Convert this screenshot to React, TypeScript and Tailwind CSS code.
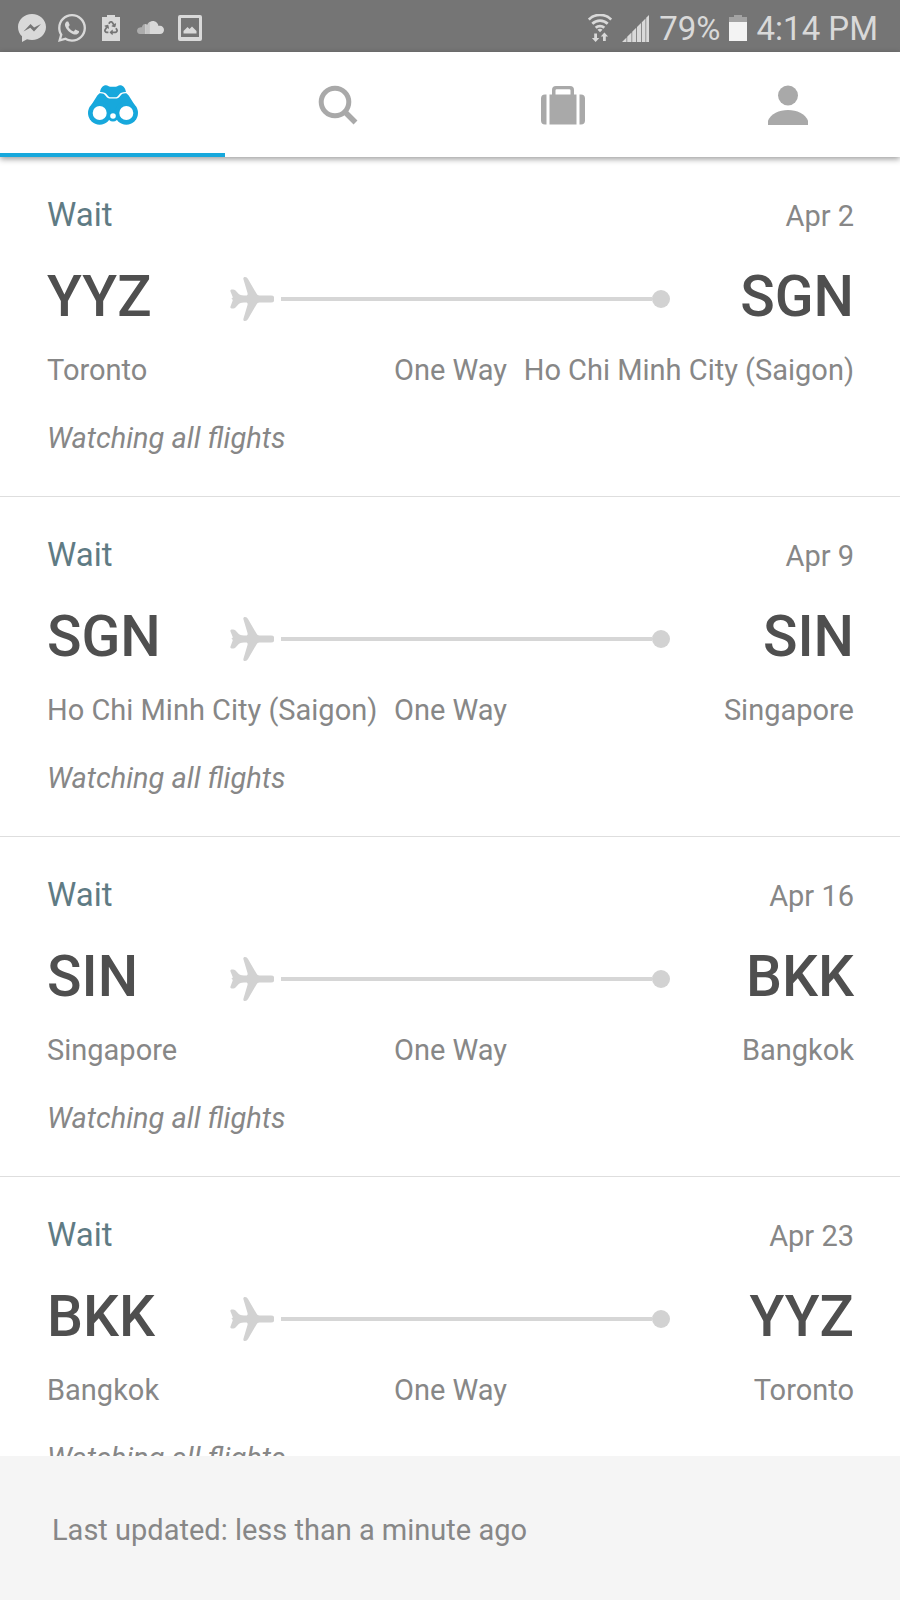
import { useState, type ReactNode } from "react";
import { FaRecycle, FaWhatsapp } from "react-icons/fa";

type Flight = {
  date: string;
  from: string;
  fromCity: string;
  to: string;
  toCity: string;
};

const flights: Flight[] = [
  { date: "Apr 2", from: "YYZ", fromCity: "Toronto", to: "SGN", toCity: "Ho Chi Minh City (Saigon)" },
  { date: "Apr 9", from: "SGN", fromCity: "Ho Chi Minh City (Saigon)", to: "SIN", toCity: "Singapore" },
  { date: "Apr 16", from: "SIN", fromCity: "Singapore", to: "BKK", toCity: "Bangkok" },
  { date: "Apr 23", from: "BKK", fromCity: "Bangkok", to: "YYZ", toCity: "Toronto" },
];

function MessengerIcon() {
  return (
    <svg viewBox="0 0 28 28" className="size-7" fill="currentColor" aria-hidden="true">
      <path
        fillRule="evenodd"
        d="M14 0C6.300 0 0 5.800 0 13c0 4 1.500 7 4 9.200V28l5-2.700c1.600.500 3.300.700 5 .700 7.700 0 14-5.800 14-13S21.700 0 14 0ZM5.500 17.500 12.500 10l3.600 3.600L23 10l-7 7.500-3.700-3.700Z"
      />
    </svg>
  );
}

function PowerSavingIcon() {
  return (
    <span className="grid" aria-hidden="true">
      <svg viewBox="0 0 18 26" className="col-start-1 row-start-1 h-[26px] w-[18px]" fill="currentColor">
        <path d="M5 0h8v2h5v24H0V2h5Z" />
      </svg>
      <FaRecycle className="col-start-1 row-start-1 size-[14px] place-self-center text-[#757575]" />
    </span>
  );
}

function CloudIcon() {
  return (
    <svg viewBox="-3 0 30 14" className="h-[14px] w-[30px]" fill="currentColor" aria-hidden="true">
      <path opacity=".55" d="M3 6.500c.500-.300 1.200-.400 1.800-.200C5.300 4 6.700 2.800 8.500 3v10H3C1.200 12.900 0 11.500 0 9.800 0 8.200 1.200 6.700 3 6.500Z" />
      <path opacity=".8" d="M8 3c1 0 1.700.300 2.300.800.500-1.300 1.300-2.300 2.700-3V13H8Z" />
      <path d="M12.800 1c1-.600 1.900-.900 3-.9 3 0 5.300 2.200 5.700 5 .500-.200 1-.300 1.500-.300 2.200 0 4 1.800 4 4.100S25.200 13 23 13H12.800Z" />
    </svg>
  );
}

function GalleryIcon() {
  return (
    <svg viewBox="0 0 24 26" className="h-[26px] w-6" fill="currentColor" aria-hidden="true">
      <path fillRule="evenodd" d="M2 0h20a2 2 0 0 1 2 2v22a2 2 0 0 1-2 2H2a2 2 0 0 1-2-2V2a2 2 0 0 1 2-2Zm1 3v19h18V3Z" />
      <path d="M5.500 18.500V16l4-4 2 2 2.500-2.500 4.500 4.500v2.500Z" />
    </svg>
  );
}

function WifiIcon() {
  return (
    <svg viewBox="0 0 24 28" className="h-7 w-6" fill="none" stroke="currentColor" aria-hidden="true">
      <path strokeWidth="2.700" d="M.800 5.500a16 16 0 0 1 22.400 0M4.300 9.800a11 11 0 0 1 15.400 0M7.700 13.800a6.200 6.200 0 0 1 8.600 0" />
      <path fill="currentColor" stroke="none" d="M9.500 15.800a3.400 3.400 0 0 1 5 0L12 18.300Z" />
      <path fill="currentColor" stroke="none" d="M6.200 19.500H9V24h2.300l-3.700 4-3.700-4h2.300ZM15 27h2.800v-4.500h2.300l-3.700-4-3.700 4H15Z" />
    </svg>
  );
}

function SignalIcon() {
  return (
    <svg viewBox="0 0 27 27" className="size-[27px]" fill="currentColor" aria-hidden="true">
      <path d="M0 27 4.500 22.500V27ZM5.200 21.800l4.300-4.300V27H5.200ZM10.200 16.800l4-4V27h-4ZM15 12l4-4v19h-4ZM19.800 7.200l3.700-3.700V27h-3.700ZM24.200 2.800 27 0v27h-2.800Z" />
    </svg>
  );
}

function BatteryIcon() {
  return (
    <svg viewBox="0 0 18 26" className="h-[26px] w-[18px]" aria-hidden="true">
      <path fill="#a3a3a3" d="M5 0h8v2h5v6H0V2h5Z" />
      <path fill="#f3f3f3" d="M0 7h18v19H0Z" />
    </svg>
  );
}

function BinocularsIcon() {
  return (
    <svg viewBox="0 0 50 40" className="h-10 w-[50px]" aria-hidden="true">
      <g fill="currentColor">
        <path d="M12 7C12.800 2.700 15 .300 18 .300c1.900 0 2.700 1.500 4.300 1.500h5.400c1.600 0 2.400-1.500 4.300-1.500 3 0 5.200 2.400 6 6.700-3.400-.1-5.600.7-7.200 2.900-1.200 1.700-2 2.300-3.600 2.300h-4.400c-1.600 0-2.400-.6-3.600-2.300C17.600 7.700 15.400 6.900 12 7Z" />
        <path d="M11.300 8.400c3-.3 5 .4 6.500 2.500 1.300 1.900 2.700 2.700 4.900 2.700h4.600c2.200 0 3.600-.8 4.900-2.700 1.500-2.100 3.500-2.800 6.500-2.500l2 2.100 8.200 13L38 34H12L1.100 23.500l8.200-13Z" />
        <circle cx="11.700" cy="28" r="11.700" />
        <circle cx="38.300" cy="28" r="11.700" />
        <circle cx="25" cy="31" r="5.500" />
      </g>
      <g fill="#ffffff">
        <circle cx="11.700" cy="28" r="7" />
        <circle cx="38.300" cy="28" r="7" />
        <circle cx="25" cy="31" r="2.800" />
      </g>
    </svg>
  );
}

function SearchIcon() {
  return (
    <svg viewBox="0 0 40 40" className="size-10" fill="none" stroke="currentColor" aria-hidden="true">
      <circle cx="17" cy="17" r="13.800" strokeWidth="5" />
      <path strokeWidth="5.500" d="m26.500 26.500 11 11" />
    </svg>
  );
}

function SuitcaseIcon() {
  return (
    <svg viewBox="0 0 44 39" className="h-[39px] w-11" fill="currentColor" aria-hidden="true">
      <path d="M5.500 8.500v30H4a4 4 0 0 1-4-4v-22a4 4 0 0 1 4-4ZM38.500 8.500v30H40a4 4 0 0 0 4-4v-22a4 4 0 0 0-4-4Z" />
      <path fillRule="evenodd" d="M8.500 8.500H11V4a4 4 0 0 1 4-4h14a4 4 0 0 1 4 4v4.500h2.500v30h-27Zm6 0h15V4.500a1.200 1.200 0 0 0-1.200-1.200H15.700a1.200 1.200 0 0 0-1.200 1.200Z" />
    </svg>
  );
}

function PersonIcon() {
  return (
    <svg viewBox="0 0 40 40" className="size-10" fill="currentColor" aria-hidden="true">
      <circle cx="20" cy="10.500" r="10" />
      <path d="M0 40v-4.500C3 29 11 25 20 25s17 4 20 10.500V40Z" />
    </svg>
  );
}

function PlaneIcon() {
  return (
    <svg viewBox="0 0 44 44" className="size-11 shrink-0" fill="currentColor" aria-hidden="true">
      <path d="M13.500 2.500C13 1 13.700 0 15 0c1.500 0 2.200.700 3 2l8.500 14.500c.6 1.200 1.500 2 3 2H41a3.500 3.500 0 0 1 0 7H29.500c-1.500 0-2.400.800-3 2L18 42c-.8 1.300-1.500 2-3 2-1.300 0-2-1-1.500-2.500L17.500 28c.4-1.500 0-2.500-1.500-2.500-2.500 0-6 .2-7.500 1.700l-3 3.300c-.7.800-1.500 1-2.700 1C.8 31.500 0 30.700.5 29.500L2.500 24c.4-1.200.3-1.500-.8-2-.7-.1-.7-.3 0-.5 1.100-.4 1.200-.8.800-2L.5 14.500C0 13.300.8 12.500 2.300 12.500c1.200 0 2.500.2 3.200 1l3 3.300c1.500 1.500 5 1.700 7.500 1.700 1.500 0 1.900-1 1.500-2.500Z" />
    </svg>
  );
}

function StatusBar() {
  return (
    <div className="flex h-[52px] shrink-0 items-center justify-between bg-[#757575] pr-[22px] pl-[18px] text-[#d9d9d9]">
      <div className="flex items-center gap-[14px] pt-1">
        <div className="flex items-center gap-[10px]">
          <MessengerIcon />
          <FaWhatsapp className="size-8" aria-hidden="true" />
        </div>
        <PowerSavingIcon />
        <CloudIcon />
        <GalleryIcon />
      </div>
      <div className="flex items-center gap-[10px] pt-1 text-[33px] leading-none">
        <WifiIcon />
        <SignalIcon />
        <div className="flex items-center gap-2">
          <span>79%</span>
          <BatteryIcon />
        </div>
        <span>4:14 PM</span>
      </div>
    </div>
  );
}

const tabs: { name: string; icon: ReactNode }[] = [
  { name: "Watching", icon: <BinocularsIcon /> },
  { name: "Search", icon: <SearchIcon /> },
  { name: "Trips", icon: <SuitcaseIcon /> },
  { name: "Profile", icon: <PersonIcon /> },
];

function TabBar() {
  const [active, setActive] = useState(0);
  return (
    <nav className="relative z-10 grid h-[105px] shrink-0 grid-cols-4 bg-white shadow-[0_2px_6px_rgba(0,0,0,0.4)]">
      {tabs.map((tab, i) => (
        <button
          key={tab.name}
          type="button"
          aria-label={tab.name}
          aria-current={i === active ? "page" : undefined}
          onClick={() => setActive(i)}
          className={
            i === active
              ? "relative flex items-center justify-center pt-px text-[#17a8dc] after:absolute after:inset-x-0 after:bottom-0 after:h-1 after:bg-[#17a8dc]"
              : "relative flex items-center justify-center pt-px text-[#a9a9a9]"
          }
        >
          {tab.icon}
        </button>
      ))}
    </nav>
  );
}

function FlightCard({ flight }: { flight: Flight }) {
  return (
    <li className="border-b border-[#dedede] pt-[38px] pr-[46px] pb-10 pl-[47px] text-[29px] leading-9 text-[#878787]">
      <div className="flex items-baseline justify-between">
        <span className="text-[33px] leading-10 text-[#5f7b84]">Wait</span>
        <span>{flight.date}</span>
      </div>
      <div className="mt-[30px] grid grid-cols-[183px_1fr_184px] items-center text-[57px] leading-[64px] font-medium text-[#4f4f4f]">
        <span>{flight.from}</span>
        <div className="flex items-center pt-1 text-[#d2d2d2]">
          <PlaneIcon />
          <div className="ml-[7px] h-1 grow bg-[#d6d6d6]" />
          <div className="size-[18px] rounded-full bg-[#d2d2d2]" />
        </div>
        <span className="text-right">{flight.to}</span>
      </div>
      <div className="mt-[23px] grid grid-cols-[1fr_auto_1fr] whitespace-nowrap">
        <span>{flight.fromCity}</span>
        <span>One Way</span>
        <span className="text-right">{flight.toCity}</span>
      </div>
      <p className="mt-8 italic">Watching all flights</p>
    </li>
  );
}

export default function App() {
  return (
    <div className="flex h-screen flex-col overflow-hidden bg-white font-[Roboto,sans-serif]">
      <StatusBar />
      <TabBar />
      <ul className="min-h-0 flex-1 overflow-y-auto [scrollbar-width:none]">
        {flights.map((flight) => (
          <FlightCard key={flight.date} flight={flight} />
        ))}
      </ul>
      <footer className="flex h-36 shrink-0 items-center bg-[#f5f5f5] px-[52px] pt-1 text-[29px] leading-9 text-[#878787]">
        Last updated: less than a minute ago
      </footer>
    </div>
  );
}
